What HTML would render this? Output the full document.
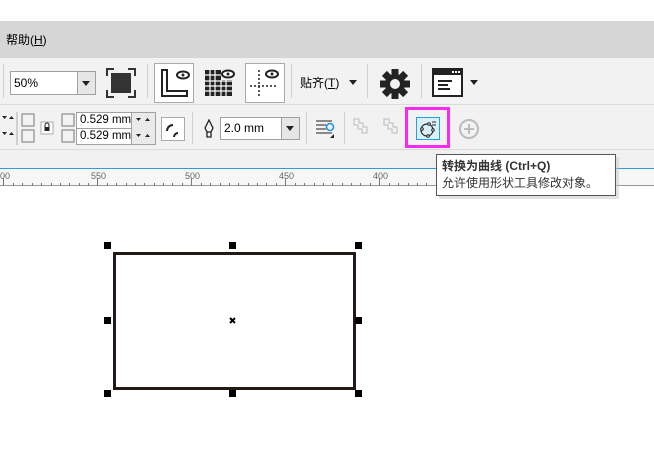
<!DOCTYPE html>
<html><head><meta charset="utf-8"><style>
*{margin:0;padding:0;box-sizing:border-box}
body{width:654px;height:466px;overflow:hidden;background:#fff;position:relative;font-family:"Liberation Sans","Noto Sans CJK SC",sans-serif;font-size:12px;color:#000}
.a{position:absolute}
.h{position:absolute;width:7px;height:7px;background:#000}
.sep{position:absolute;width:1px;background:#d0d0d0}
.inp{position:absolute;background:#fff;border:1px solid #a0a0a0;font-size:12px;padding-left:3px;line-height:18px}
.dd{position:absolute;background:#e6e6e6;border:1px solid #a0a0a0}
</style></head><body>
<div class="a" style="left:0;top:21px;width:654px;height:37px;background:#d6d6d6"></div>
<div class="a" style="left:6px;top:31px;font-size:12px">帮助(<u>H</u>)</div>
<div class="a" style="left:0;top:58px;width:654px;height:47px;background:#f2f2f2;border-bottom:1px solid #dcdcdc"></div>
<div class="a" style="left:0;top:105px;width:654px;height:45px;background:#f2f2f2;border-bottom:1px solid #dcdcdc"></div>
<div class="a" style="left:0;top:150px;width:654px;height:18px;background:#f0f0f0"></div>
<div class="a" style="left:0;top:168px;width:654px;height:1px;background:#2c9cdc"></div>
<div class="a" style="left:0;top:169px;width:654px;height:17px;background:#f7f7f7;border-bottom:1px solid #999"></div>
<!-- ruler labels -->
<div class="a" style="left:0;top:171px;font-size:9px;color:#666">00</div>
<div class="a" style="left:91px;top:171px;font-size:9px;color:#666">550</div>
<div class="a" style="left:185px;top:171px;font-size:9px;color:#666">500</div>
<div class="a" style="left:279px;top:171px;font-size:9px;color:#666">450</div>
<div class="a" style="left:373px;top:171px;font-size:9px;color:#666">400</div>
<svg class="a" style="left:0;top:178px" width="654" height="8">
<g stroke="#777" stroke-width="1">
<path d="M3.5 0v8M97.5 0v8M191.5 0v8M285.5 0v8M379.5 0v8M473.5 0v8M567.5 0v8"/>
<path d="M13.5 5v3M22.5 5v3M32.5 5v3M41.5 5v3M51.5 5v3M60.5 5v3M69.5 5v3M79.5 5v3M88.5 5v3M107.5 5v3M116.5 5v3M126.5 5v3M135.5 5v3M144.5 5v3M154.5 5v3M163.5 5v3M172.5 5v3M182.5 5v3M201.5 5v3M210.5 5v3M220.5 5v3M229.5 5v3M238.5 5v3M248.5 5v3M257.5 5v3M266.5 5v3M276.5 5v3M295.5 5v3M304.5 5v3M314.5 5v3M323.5 5v3M332.5 5v3M342.5 5v3M351.5 5v3M360.5 5v3M370.5 5v3M389.5 5v3M398.5 5v3M408.5 5v3M417.5 5v3M426.5 5v3"/>
</g></svg>
<!-- row1 -->
<div class="sep" style="left:3px;top:64px;height:34px"></div>
<div class="inp" style="left:10px;top:71px;width:68px;height:24px;line-height:22px">50%</div>
<div class="dd" style="left:77px;top:71px;width:19px;height:24px"></div>
<div class="a" style="left:82px;top:81px;border:4px solid transparent;border-top:5px solid #222;width:0;height:0"></div>
<svg class="a" style="left:106px;top:68px" width="30" height="30"><path d="M1 8V1h7M22 1h7v7M29 22v7h-7M8 29H1v-7" stroke="#333" stroke-width="2" fill="none"/><rect x="5" y="5" width="20" height="20" fill="#333"/></svg>
<div class="sep" style="left:147px;top:64px;height:34px"></div>
<div class="a" style="left:154px;top:63px;width:40px;height:40px;border:1px solid #aaa;background:#fff"></div>
<svg class="a" style="left:158px;top:67px" width="34" height="32"><path d="M4 3h5v21h20v5H4z" fill="none" stroke="#222" stroke-width="2"/><ellipse cx="25" cy="8" rx="6" ry="3.5" fill="none" stroke="#222" stroke-width="2"/><circle cx="25" cy="8" r="1.5" fill="#222"/></svg>
<svg class="a" style="left:203px;top:67px" width="34" height="32"><g fill="#222"><rect x="2" y="3" width="16" height="26"/><rect x="18" y="13" width="11" height="16"/></g><g stroke="#fff" stroke-width="1.2"><path d="M2 8h27M2 14h27M2 19h27M2 24h27M7 3v26M12 3v26M18 13v16M23 13v16"/></g><ellipse cx="25" cy="7" rx="6" ry="3.5" fill="#fff" stroke="#222" stroke-width="2"/><circle cx="25" cy="7" r="1.5" fill="#222"/></svg>
<div class="a" style="left:245px;top:63px;width:40px;height:40px;border:1px solid #aaa;background:#fff"></div>
<svg class="a" style="left:248px;top:67px" width="34" height="32"><path d="M11 3v26M2 19h26" stroke="#222" stroke-width="1.5" stroke-dasharray="2 2"/><ellipse cx="24" cy="7" rx="6" ry="3.5" fill="none" stroke="#222" stroke-width="2"/><circle cx="24" cy="7" r="1.5" fill="#222"/></svg>
<div class="sep" style="left:291px;top:64px;height:34px"></div>
<div class="a" style="left:300px;top:74px;font-size:12px">贴齐(<u>T</u>)</div>
<div class="a" style="left:349px;top:80px;border:4px solid transparent;border-top:5px solid #222"></div>
<div class="sep" style="left:367px;top:64px;height:34px"></div>
<svg class="a" style="left:379px;top:68px" width="32" height="32" viewBox="-16 -16 32 32"><g fill="#222"><circle r="10"/><g id="t"><rect x="-3.5" y="-15" width="7" height="7"/></g><use href="#t" transform="rotate(45)"/><use href="#t" transform="rotate(90)"/><use href="#t" transform="rotate(135)"/><use href="#t" transform="rotate(180)"/><use href="#t" transform="rotate(225)"/><use href="#t" transform="rotate(270)"/><use href="#t" transform="rotate(315)"/></g><circle r="5" fill="#f2f2f2"/></svg>
<div class="sep" style="left:421px;top:64px;height:34px"></div>
<svg class="a" style="left:432px;top:68px" width="32" height="30"><rect x="1" y="1" width="29" height="27" fill="#fff" stroke="#222" stroke-width="2"/><rect x="1" y="1" width="29" height="6" fill="#222"/><g fill="#fff"><rect x="20" y="3" width="2" height="2"/><rect x="23" y="3" width="2" height="2"/><rect x="26" y="3" width="2" height="2"/></g><path d="M6 13h14M6 17h10M6 21h12" stroke="#222" stroke-width="2"/></svg>
<div class="a" style="left:470px;top:80px;border:4px solid transparent;border-top:5px solid #222"></div>
<!-- row2 -->
<svg class="a" style="left:0;top:112px" width="160" height="34"><g fill="#222"><path d="M2 4h5l-2.5 3z"/><path d="M9 7h5l-2.5-3z"/><path d="M2 20h5l-2.5 3z"/><path d="M9 23h5l-2.5-3z"/></g><path d="M17 0v33" stroke="#aaa"/><rect x="22" y="2" width="12" height="12" fill="none" stroke="#777"/><rect x="22" y="18" width="12" height="12" fill="none" stroke="#777"/><rect x="41" y="10" width="12" height="12" fill="#fff" stroke="#aaa"/><rect x="44.5" y="15" width="5" height="4" fill="#222"/><path d="M45 15v-2a2 2 0 014 0v2" stroke="#222" fill="none"/><rect x="62" y="2" width="12" height="12" fill="none" stroke="#777"/><rect x="62" y="18" width="12" height="12" fill="none" stroke="#777"/></svg>
<div class="inp" style="left:76px;top:112px;width:56px;height:17px;line-height:15px;font-size:11.5px;overflow:hidden;white-space:nowrap">0.529 mm</div>
<div class="inp" style="left:76px;top:128px;width:56px;height:17px;line-height:15px;font-size:11.5px;overflow:hidden;white-space:nowrap">0.529 mm</div>
<div class="dd" style="left:131px;top:112px;width:25px;height:33px;background:#eaeaea"></div>
<svg class="a" style="left:131px;top:112px" width="25" height="33"><g fill="#222"><path d="M5 6h5l-2.5 3z"/><path d="M14 9h5l-2.5-3z"/><path d="M5 22h5l-2.5 3z"/><path d="M14 25h5l-2.5-3z"/></g></svg>
<div class="a" style="left:161px;top:117px;width:24px;height:24px;border:1px solid #aaa;background:#fff"></div>
<svg class="a" style="left:161px;top:117px" width="24" height="24"><path d="M6 14a6 6 0 016-6M13 20a4 4 0 014-4" stroke="#222" stroke-width="2" fill="none"/></svg>
<div class="sep" style="left:192px;top:112px;height:32px"></div>
<svg class="a" style="left:203px;top:119px" width="12" height="20"><path d="M6 1L2 9l2 4h4l2-4z M4 13v5h4v-5" fill="none" stroke="#222" stroke-width="1.3"/></svg>
<div class="inp" style="left:220px;top:117px;width:62px;height:23px;line-height:21px">2.0 mm</div>
<div class="dd" style="left:281px;top:117px;width:19px;height:23px"></div>
<div class="a" style="left:286px;top:126px;border:4px solid transparent;border-top:5px solid #222"></div>
<div class="sep" style="left:306px;top:112px;height:32px"></div>
<svg class="a" style="left:315px;top:117px" width="22" height="24"><path d="M1 4h16M1 8h10M1 12h10M1 16h16" stroke="#222"/><circle cx="15" cy="10" r="3.5" fill="none" stroke="#1a8fe0" stroke-width="1.5"/><path d="M15 21h4v-4z" fill="#222"/></svg>
<div class="sep" style="left:344px;top:112px;height:32px"></div>
<svg class="a" style="left:352px;top:117px" width="64" height="22"><g fill="none" stroke="#bbb"><path d="M2 2h5v4h4v4h4v6h-5v-4H6V8H2z"/><path d="M32 2h5v4h4v4h4v6h-5v-4h-4V8h-4z"/></g></svg>
<div class="a" style="left:405px;top:107px;width:45px;height:41px;border:3px solid #f82af0"></div>
<div class="a" style="left:416px;top:117px;width:24px;height:23px;border:1px solid #1fa0e8;background:#dcf0fb"></div>
<svg class="a" style="left:416px;top:117px" width="24" height="23"><circle cx="11" cy="13" r="6" fill="none" stroke="#222" stroke-width="1.2"/><g fill="#fff" stroke="#222"><circle cx="6" cy="12" r="1.3"/><circle cx="13" cy="7" r="1.3"/><circle cx="12" cy="19" r="1.3"/><circle cx="17" cy="13" r="1.3"/></g><path d="M16 5h4M16 8h4" stroke="#222"/></svg>
<svg class="a" style="left:458px;top:118px" width="22" height="22"><circle cx="11" cy="11" r="9" fill="none" stroke="#bbb" stroke-width="2"/><path d="M11 6v10M6 11h10" stroke="#bbb" stroke-width="2"/></svg>
<!-- tooltip -->
<div class="a" style="left:439px;top:157px;width:180px;height:42px;background:#c8c8c8;opacity:.5"></div>
<div class="a" style="left:436px;top:154px;width:180px;height:42px;background:#fff;border:1px solid #555"></div>
<div class="a" style="left:442px;top:157px;font-size:12px;font-weight:bold;color:#333">转换为曲线 (Ctrl+Q)</div>
<div class="a" style="left:442px;top:174px;font-size:12px;color:#333">允许使用形状工具修改对象。</div>
<!-- rectangle -->
<div class="a" style="left:113px;top:252px;width:243px;height:138px;border:3px solid #231815"></div>
<div class="h" style="left:104px;top:242px"></div><div class="h" style="left:229px;top:242px"></div><div class="h" style="left:355px;top:242px"></div>
<div class="h" style="left:104px;top:317px"></div><div class="h" style="left:355px;top:317px"></div>
<div class="h" style="left:104px;top:390px"></div><div class="h" style="left:229px;top:390px"></div><div class="h" style="left:355px;top:390px"></div>
<svg class="a" style="left:229px;top:317px" width="7" height="7"><path d="M1 1l5 5M6 1L1 6" stroke="#000" stroke-width="2"/></svg>
</body></html>
